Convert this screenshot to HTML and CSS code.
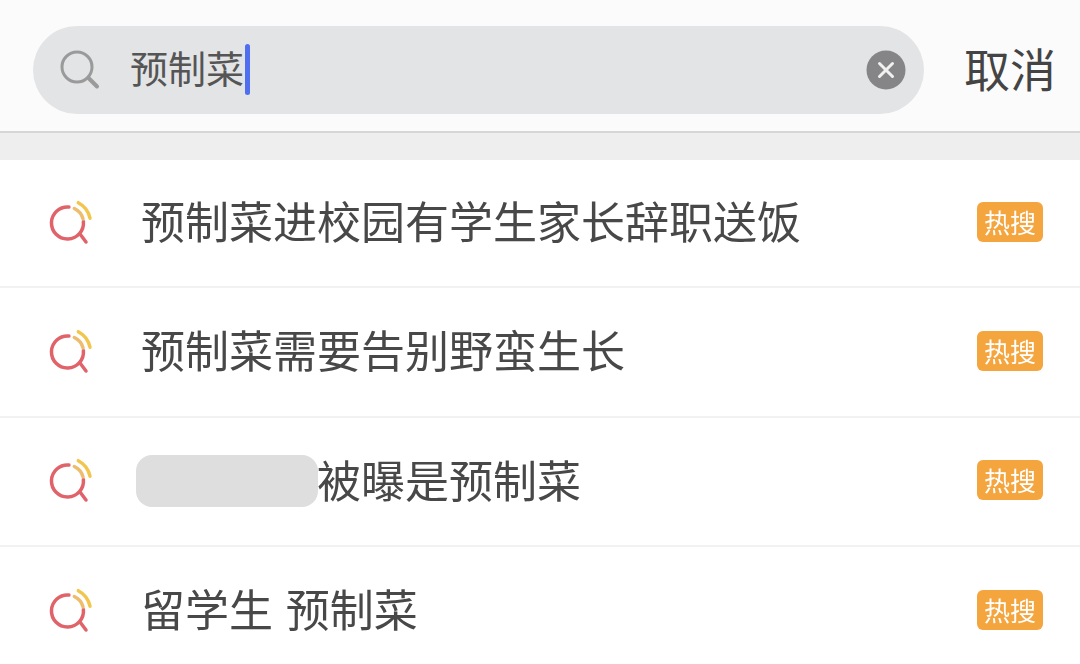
FILE: index.html
```html
<!DOCTYPE html>
<html>
<head>
  <meta charset="UTF-8">
  <title>搜索</title>
  <link rel="stylesheet" href="styles.css">
</head>
<body>

  <div class="search-head">
    <div class="search-box">
      <svg class="search-icon" viewBox="0 0 40 40" width="40" height="40">
        <circle cx="17" cy="17" r="15" fill="none" stroke="#9a9a9a" stroke-width="3"/>
        <path d="M29 28.500 L37 36.500" fill="none" stroke="#9a9a9a" stroke-width="4" stroke-linecap="round"/>
      </svg>
      <span class="search-text">预制菜</span><span class="caret"></span>
      <svg class="clear-icon" viewBox="0 0 40 40" width="40" height="40">
        <circle cx="20" cy="20" r="19.500" fill="#858587"/>
        <path d="M13.500 13.500 L26.500 26.500 M26.500 13.500 L13.500 26.500" stroke="#f0f0f0" stroke-width="3" stroke-linecap="round"/>
      </svg>
    </div>
    <div class="cancel">取消</div>
  </div>
  <div class="gap-band"></div>

  <div class="list">
    <div class="row">
      <svg class="hot-icon" viewBox="0 0 46 50" width="46" height="50">
        <path d="M19.900 9.100 A16 16 0 1 0 34.400 23.600" fill="none" stroke="#e0636a" stroke-width="3.500" stroke-linecap="round"/>
        <path d="M31 36 L37 44" stroke="#e0636a" stroke-width="3.500" stroke-linecap="round"/>
        <path d="M25.300 10.500 A16 16 0 0 1 34 20.900" fill="none" stroke="#eebc6e" stroke-width="3.500" stroke-linecap="round"/>
        <path d="M29.300 4.700 A23 23 0 0 1 41 20.200" fill="none" stroke="#f2c64e" stroke-width="3.500" stroke-linecap="round"/>
      </svg>
      <div class="row-text">预制菜进校园有学生家长辞职送饭</div>
      <span class="tag">热搜</span>
    </div>
    <div class="row">
      <svg class="hot-icon" viewBox="0 0 46 50" width="46" height="50">
        <path d="M19.900 9.100 A16 16 0 1 0 34.400 23.600" fill="none" stroke="#e0636a" stroke-width="3.500" stroke-linecap="round"/>
        <path d="M31 36 L37 44" stroke="#e0636a" stroke-width="3.500" stroke-linecap="round"/>
        <path d="M25.300 10.500 A16 16 0 0 1 34 20.900" fill="none" stroke="#eebc6e" stroke-width="3.500" stroke-linecap="round"/>
        <path d="M29.300 4.700 A23 23 0 0 1 41 20.200" fill="none" stroke="#f2c64e" stroke-width="3.500" stroke-linecap="round"/>
      </svg>
      <div class="row-text">预制菜需要告别野蛮生长</div>
      <span class="tag">热搜</span>
    </div>
    <div class="row">
      <svg class="hot-icon" viewBox="0 0 46 50" width="46" height="50">
        <path d="M19.900 9.100 A16 16 0 1 0 34.400 23.600" fill="none" stroke="#e0636a" stroke-width="3.500" stroke-linecap="round"/>
        <path d="M31 36 L37 44" stroke="#e0636a" stroke-width="3.500" stroke-linecap="round"/>
        <path d="M25.300 10.500 A16 16 0 0 1 34 20.900" fill="none" stroke="#eebc6e" stroke-width="3.500" stroke-linecap="round"/>
        <path d="M29.300 4.700 A23 23 0 0 1 41 20.200" fill="none" stroke="#f2c64e" stroke-width="3.500" stroke-linecap="round"/>
      </svg>
      <div class="row-text row-text-masked"><span class="mask"></span>被曝是预制菜</div>
      <span class="tag">热搜</span>
    </div>
    <div class="row">
      <svg class="hot-icon" viewBox="0 0 46 50" width="46" height="50">
        <path d="M19.900 9.100 A16 16 0 1 0 34.400 23.600" fill="none" stroke="#e0636a" stroke-width="3.500" stroke-linecap="round"/>
        <path d="M31 36 L37 44" stroke="#e0636a" stroke-width="3.500" stroke-linecap="round"/>
        <path d="M25.300 10.500 A16 16 0 0 1 34 20.900" fill="none" stroke="#eebc6e" stroke-width="3.500" stroke-linecap="round"/>
        <path d="M29.300 4.700 A23 23 0 0 1 41 20.200" fill="none" stroke="#f2c64e" stroke-width="3.500" stroke-linecap="round"/>
      </svg>
      <div class="row-text row-text-spaced">留学生 预制菜</div>
      <span class="tag">热搜</span>
    </div>
  </div>

</body>
</html>
```
FILE: styles.css
```css
html, body { height: 100%; }
body {
  margin: 0;
  background-color: #fff;
  font-family: "Noto Sans CJK SC", "Liberation Sans", sans-serif;
  color: #484848;
  overflow: hidden;
  filter: blur(0.5px);
}
.search-head {
  display: flex;
  align-items: center;
  height: 133px;
  padding: 8px 24px 0 33px;
  box-sizing: border-box;
  background-color: #fbfbfb;
  border-bottom: 2px solid #d6d6d6;
}
.search-box {
  display: flex;
  align-items: center;
  flex: 1;
  height: 88px;
  border-radius: 44px;
  background-color: #e3e4e6;
  padding: 0 18px 0 27px;
}
.search-icon { flex-shrink: 0; margin-right: 30px; }
.search-text {
  padding-bottom: 5px;
  font-size: 38px;
  line-height: 82px;
  color: #555;
}
.caret {
  width: 5px;
  height: 51px;
  margin-left: 1px;
  border-radius: 3px;
  background-color: #4f6ff0;
}
.clear-icon { flex-shrink: 0; margin-left: auto; }
.cancel {
  margin-left: 40px;
  padding-bottom: 5px;
  font-size: 46px;
  line-height: 60px;
  color: #444;
}
.gap-band {
  height: 27px;
  background-color: #eeeeee;
}
.list { margin-top: -1px; }
.row {
  display: flex;
  align-items: center;
  height: 127.300px;
  padding: 0 37px 0 49px;
  border-bottom: 2px solid #f2f2f2;
}
.hot-icon { flex-shrink: 0; margin-right: 46px; }
.row-text {
  flex: 1;
  padding-bottom: 5px;
  font-size: 44px;
  line-height: 60px;
  white-space: nowrap;
}
.row-text-spaced { word-spacing: 3px; }
.row-text-masked { display: flex; align-items: center; margin-left: -5px; }
.mask {
  display: block;
  width: 182px;
  height: 52px;
  margin-bottom: -5px;
  margin-right: -1px;
  border-radius: 16px;
  background-color: #dedede;
}
.tag {
  width: 66px;
  height: 40px;
  margin-bottom: 2px;
  border-radius: 6px;
  background-color: #f5a53e;
  color: #fff;
  font-size: 26px;
  line-height: 39px;
  text-align: center;
}
```
